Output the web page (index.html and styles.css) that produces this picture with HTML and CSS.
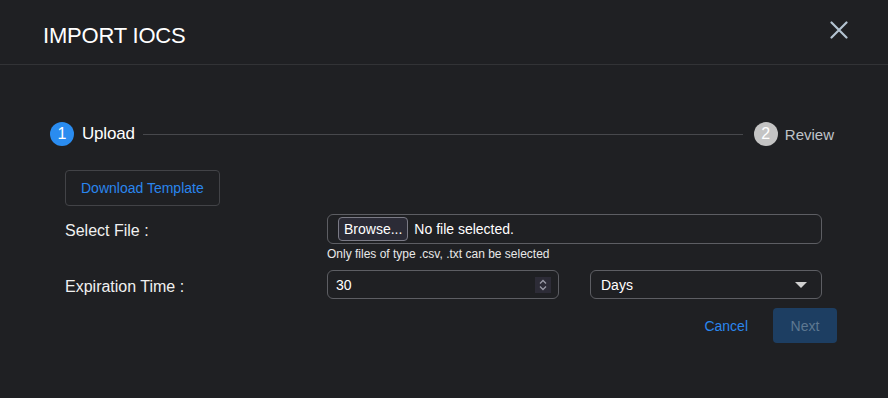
FILE: index.html
```html
<html>
    <head>
        <title>Import IOCs</title>
        <meta name="viewport" content="width=device-width, initial-scale=1.0">
        <link rel="stylesheet" href="styles.css">
    </head>
    <body>
        <div class="modal">
            <div class="header">
                <h1>IMPORT IOCS</h1>
                <svg class="close" width="18" height="18" viewBox="0 0 18 18">
                    <path d="M1.5 1.5L16.5 16.5M16.5 1.5L1.5 16.5" stroke="#b3c3d1" stroke-width="2.2" stroke-linecap="round"/>
                </svg>
            </div>
            <div class="body">
                <div class="steps">
                    <span class="dot active">1</span>
                    <span class="step active">Upload</span>
                    <span class="line"></span>
                    <span class="dot">2</span>
                    <span class="step">Review</span>
                </div>
                <div class="content">
                    <button class="outline">Download Template</button>
                    <div class="row">
                        <label>Select File :</label>
                        <div class="field">
                            <div class="file"><span class="browse">Browse...</span> No file selected.</div>
                            <div class="hint">Only files of type .csv, .txt can be selected</div>
                        </div>
                    </div>
                    <div class="row exp">
                        <label>Expiration Time :</label>
                        <div class="pair">
                            <div class="input">30
                                <span class="spin">
                                    <svg width="8" height="12" viewBox="0 0 8 12"><path d="M1 4.5L4 1.5L7 4.5M1 7.5L4 10.5L7 7.5" stroke="#9a9aa6" stroke-width="1.3" fill="none"/></svg>
                                </span>
                            </div>
                            <div class="input select">Days <span class="caret"></span></div>
                        </div>
                    </div>
                    <div class="actions">
                        <span class="link">Cancel</span>
                        <button class="next">Next</button>
                    </div>
                </div>
            </div>
        </div>
    </body>
</html>
```

FILE: styles.css
```css
body {margin:0;background:#1f2023;color:#f2f2f2;font-family:"Liberation Sans",Arial,sans-serif;}
.modal {width:888px;height:398px;}
.header {height:65px;border-bottom:1px solid #323336;display:flex;align-items:center;justify-content:space-between;padding:0 40px 0 43px;box-sizing:border-box;}
.header h1 {margin:7px 0 0 0;font-size:22px;font-weight:normal;letter-spacing:-0.2px;color:#fff;}
.close {margin-top:-4px;}
.body {padding:57px 54px 0 50px;}
.steps {display:flex;align-items:center;height:24px;}
.dot {width:24px;height:24px;border-radius:50%;background:#c4c4c4;color:#fff;font-size:16px;display:flex;align-items:center;justify-content:center;}
.dot.active {background:#2a8cf0;}
.step {font-size:15px;color:#bfc4c9;margin-left:7px;}
.step.active {font-size:17px;color:#fff;margin-left:8px;margin-right:8px;letter-spacing:-0.2px;}
.line {flex:1;height:1px;background:#47484c;margin-right:11px;}
.content {padding:24px 0 0 15px;}
.outline {background:none;border:1px solid #424347;border-radius:4px;color:#2a86ee;font-family:inherit;font-size:14px;height:36px;padding:0 15px;}
.row {display:flex;margin-top:8px;}
label {width:262px;font-size:16px;color:#f0f0f0;padding-top:8px;}
.field {flex:1;margin-right:12px;}
.file {height:30px;box-sizing:border-box;border:1px solid #5d5e63;border-radius:6px;display:flex;align-items:center;padding-left:10px;font-size:14px;color:#fff;}
.browse {background:#2b2b36;border:1px solid #7a7a85;border-radius:4px;padding:3px 5px;margin-right:6px;}
.hint {font-size:12px;color:#e8e8e8;margin-top:3px;}
.exp {margin-top:9px;}
.exp label {padding-top:8px;}
.pair {flex:1;display:grid;grid-template-columns:1fr 1fr;gap:31px;margin-right:12px;}
.input {box-sizing:border-box;height:29px;border:1px solid #5d5e63;border-radius:6px;display:flex;align-items:center;justify-content:space-between;padding:0 7px 0 8px;font-size:14px;color:#fff;}
.spin {width:16px;height:16px;background:#2d2c37;display:flex;align-items:center;justify-content:center;}
.select {padding:0 14px 0 10px;}
.caret {border-left:6px solid transparent;border-right:6px solid transparent;border-top:6px solid #d0d0d0;}
.actions {display:flex;justify-content:flex-end;align-items:center;gap:25px;margin-top:9px;margin-right:-3px;}
.link {color:#2a86ee;font-size:14px;}
.next {background:#1d3e62;border:none;border-radius:4px;color:#5e7891;font-family:inherit;font-size:14px;width:64px;height:35px;}
```
